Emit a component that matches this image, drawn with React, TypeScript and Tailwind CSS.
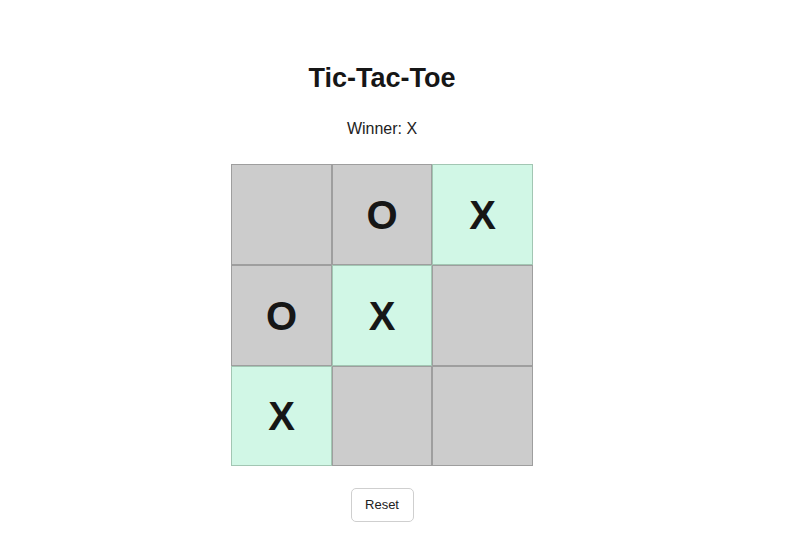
const board: (string | null)[] = [null, "O", "X", "O", "X", null, "X", null, null];
const winLine = [2, 4, 6];

function Cell({ value, win }: { value: string | null; win: boolean }) {
  return (
    <button
      type="button"
      className={`flex items-center justify-center border text-[40px] font-bold leading-none text-[#161616] ${
        win ? "bg-[#d1f7e6] border-[#a2c6b3]" : "bg-[#cccccc] border-[#9e9e9e]"
      }`}
    >
      {value}
    </button>
  );
}

export default function App() {
  return (
    <div className="w-[764px] flex flex-col items-center pt-[63px] font-['Liberation_Sans',Arial,sans-serif] text-[#161616]">
      <h1 className="text-[27px] leading-[31px] font-bold">Tic-Tac-Toe</h1>
      <p className="mt-[25px] text-base leading-5 text-[#222]">Winner: X</p>
      <div className="mt-[25px] grid grid-cols-[101px_100px_101px] grid-rows-[101px_101px_100px]">
        {board.map((v, i) => (
          <Cell key={i} value={v} win={winLine.includes(i)} />
        ))}
      </div>
      <button
        type="button"
        className="mt-[22px] h-[34px] w-[63px] rounded-[5px] border border-[#cfcfcf] bg-white text-[13px] text-[#222]"
      >
        Reset
      </button>
    </div>
  );
}
